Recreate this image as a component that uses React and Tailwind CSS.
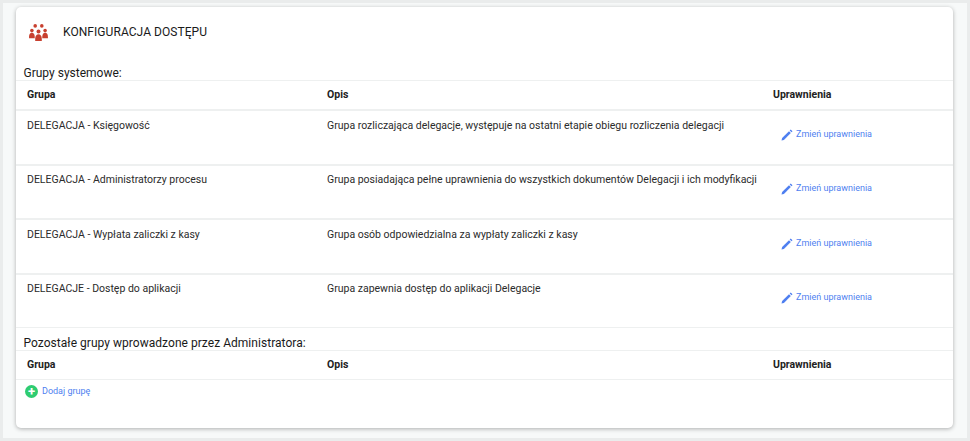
import React from 'react';

const rows = [
  { name: 'DELEGACJA - Księgowość', desc: 'Grupa rozliczająca delegacje, występuje na ostatni etapie obiegu rozliczenia delegacji', top: 'pt-[7px]', link: 'pt-[17px]' },
  { name: 'DELEGACJA - Administratorzy procesu', desc: 'Grupa posiadająca pełne uprawnienia do wszystkich dokumentów Delegacji i ich modyfikacji', top: 'pt-[6px]', link: 'pt-[16px]' },
  { name: 'DELEGACJA - Wypłata zaliczki z kasy', desc: 'Grupa osób odpowiedzialna za wypłaty zaliczki z kasy', top: 'pt-[7px]', link: 'pt-[17px]' },
  { name: 'DELEGACJE - Dostęp do aplikacji', desc: 'Grupa zapewnia dostęp do aplikacji Delegacje', top: 'pt-[6px]', link: 'pt-[16px]' },
];

function GroupIcon() {
  return (
    <svg width="19" height="17" viewBox="0 0 20 18" fill="#c8402f">
      <circle cx="6.500" cy="2" r="1.900" />
      <circle cx="13.500" cy="2" r="1.900" />
      <circle cx="3" cy="7" r="1.900" />
      <circle cx="17" cy="7" r="1.900" />
      <circle cx="10" cy="8" r="2.100" />
      <path d="M0 13.500c0-3 1.300-4.200 3-4.200s3 1.200 3 4.200v1.500h-6z" />
      <path d="M14 13.500c0-3 1.300-4.200 3-4.200s3 1.200 3 4.200v1.500h-6z" />
      <path d="M6.500 15.500c0-3 1.500-4.700 3.500-4.700s3.500 1.700 3.500 4.700v2.500h-7z" />
    </svg>
  );
}

function PencilIcon() {
  return (
    <svg width="12" height="12" viewBox="0 0 12 12">
      <path d="M0.500 11.500l0.600-2.400 6.900-6.900 1.800 1.800-6.900 6.900z" fill="#4f7ff0" />
      <path d="M8.700 1.500l1-1 1.800 1.800-1 1z" fill="#4f7ff0" />
    </svg>
  );
}

function HeaderRow() {
  return (
    <div className="grid grid-cols-[300px_446px_1fr] pl-[11px] h-[29px] items-center border-t border-[#eef0f0] text-[10.5px] font-bold text-[#222]">
      <div>Grupa</div>
      <div>Opis</div>
      <div>Uprawnienia</div>
    </div>
  );
}

export default function App() {
  return (
    <div className="box-border w-[970px] h-[441px] bg-[#f7f9f9] border-[3px] border-[#eaecec] pt-[4px] pl-[13px] overflow-hidden" style={{ fontFamily: 'Roboto, sans-serif' }}>
      <div className="w-[937px] h-[421px] bg-white rounded-[5px] shadow-[0_1px_4px_rgba(0,0,0,0.3)]">
        <div className="flex items-center h-[50px] pl-[13px]">
          <GroupIcon />
          <span className="ml-[15px] text-[12px] tracking-[0.005em] text-[#1a1a1a]">KONFIGURACJA DOSTĘPU</span>
        </div>
        <div className="pl-[7.500px] pt-[9px] h-[23px] text-[12px] leading-[14px] text-[#1a1a1a]">Grupy systemowe:</div>
        <HeaderRow />
        {rows.map((row) => (
          <div key={row.name} className="grid grid-cols-[300px_446px_1fr] pl-[11px] h-[54.5px] border-t-2 border-[#eef0f0] text-[10.5px] text-[#2b2b2b]">
            <div className={row.top}>{row.name}</div>
            <div className={row.top}>{row.desc}</div>
            <div className={`${row.link} pl-[8px] flex items-start gap-[3px] text-[#4f7ff0] text-[9px]`}>
              <span className="mt-[1px]"><PencilIcon /></span>
              <span>Zmień uprawnienia</span>
            </div>
          </div>
        ))}
        <div className="border-t border-[#eef0f0] pl-[7.500px] pt-[8px] h-[23px] text-[12px] tracking-[0.003em] leading-[14px] text-[#1a1a1a]">Pozostałe grupy wprowadzone przez Administratora:</div>
        <HeaderRow />
        <div className="border-t border-[#eef0f0] pl-[9px] pt-[5px] flex items-center gap-[4px] text-[9px] text-[#4f7ff0]">
          <span className="w-[13px] h-[13px] rounded-full bg-[#2ecc71] flex items-center justify-center text-white text-[13px] font-bold leading-none">+</span>
          <span>Dodaj grupę</span>
        </div>
      </div>
    </div>
  );
}
